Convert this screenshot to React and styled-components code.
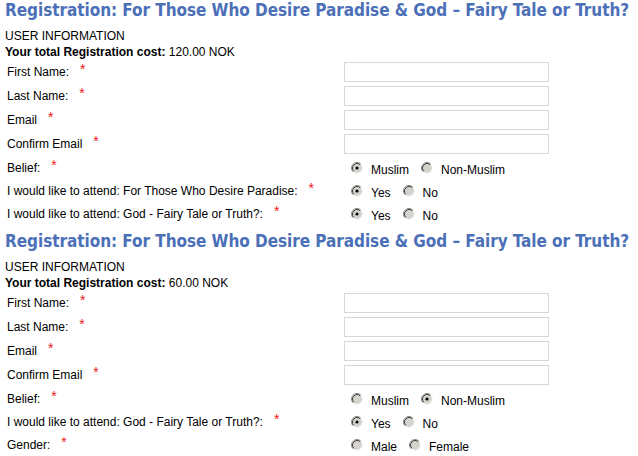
import styled, { createGlobalStyle } from "styled-components";

const Global = createGlobalStyle`
  body {
    margin: 0;
    background: #fff;
    font-family: "Liberation Sans", Arial, sans-serif;
    font-size: 12px;
    color: #000;
  }
`;

const Page = styled.div`
  padding: 0 0 0 5px;
  width: 633px;
`;

const Section = styled.section`
  margin-bottom: 6px;
`;

const Title = styled.h2`
  margin: 0 0 8px;
  font-family: "DejaVu Sans Condensed", "DejaVu Sans", sans-serif;
  font-weight: bold;
  font-size: 17px;
  letter-spacing: -0.05px;
  line-height: 20px;
  color: #4b70b7;
  white-space: nowrap;
`;

const Line = styled.div`
  line-height: 16px;
  b { font-weight: bold; }
`;

const Form = styled.div`
  display: grid;
  grid-template-columns: 339px 1fr;
`;

const Label = styled.div`
  display: flex;
  align-items: center;
  height: ${(p) => (p.$radio ? 23 : 24)}px;
  padding-left: 2px;
`;

const Star = styled.span`
  color: #f01818;
  font-size: 14px;
  margin-left: 11px;
  position: relative;
  top: -3px;
`;

const Field = styled.div`
  display: flex;
  align-items: center;
  height: 24px;
`;

const Input = styled.input`
  box-sizing: border-box;
  width: 205px;
  height: 20px;
  margin: 0;
  border: 1px solid #d7d7d7;
  background: #fff;
  outline: none;
`;

const Options = styled.div`
  display: flex;
  align-items: center;
  height: 23px;
  padding-left: 7px;
`;

const Option = styled.label`
  display: flex;
  align-items: center;
  margin-right: 12px;

  span {
    margin-left: 8px;
    position: relative;
    top: 2px;
  }
`;

function Radio({ checked }) {
  return (
    <svg width="12" height="12" viewBox="0 0 12 12">
      <circle cx="6" cy="6" r="5" fill="#d6d3ce" />
      <path d="M2.11 9.89 A5.5 5.5 0 0 1 9.89 2.11" fill="none" stroke="#8a8a8a" strokeWidth="1" />
      <path d="M9.89 2.11 A5.5 5.5 0 0 1 2.11 9.89" fill="none" stroke="#f4f4f4" strokeWidth="1" />
      <path d="M2.82 9.18 A4.5 4.5 0 0 1 9.18 2.82" fill="none" stroke="#3c3c3c" strokeWidth="1" />
      {checked && <circle cx="6" cy="6" r="1.6" fill="#000" />}
    </svg>
  );
}

function TextRow({ label }) {
  return (
    <>
      <Label>
        {label}
        <Star>*</Star>
      </Label>
      <Field>
        <Input type="text" />
      </Field>
    </>
  );
}

function RadioRow({ label, options, selected }) {
  return (
    <>
      <Label $radio>
        {label}
        <Star>*</Star>
      </Label>
      <Options>
        {options.map((o) => (
          <Option key={o}>
            <Radio checked={o === selected} />
            <span>{o}</span>
          </Option>
        ))}
      </Options>
    </>
  );
}

const TITLE = "Registration: For Those Who Desire Paradise & God \u2013 Fairy Tale or Truth?";

function Registration({ cost, radios }) {
  return (
    <Section>
      <Title>{TITLE}</Title>
      <Line>USER INFORMATION</Line>
      <Line>
        <b>Your total Registration cost:</b> {cost} NOK
      </Line>
      <Form>
        <TextRow label="First Name:" />
        <TextRow label="Last Name:" />
        <TextRow label="Email" />
        <TextRow label="Confirm Email" />
        {radios.map((r) => (
          <RadioRow key={r.label} {...r} />
        ))}
      </Form>
    </Section>
  );
}

const first = [
  { label: "Belief:", options: ["Muslim", "Non-Muslim"], selected: "Muslim" },
  { label: "I would like to attend: For Those Who Desire Paradise:", options: ["Yes", "No"], selected: "Yes" },
  { label: "I would like to attend: God - Fairy Tale or Truth?:", options: ["Yes", "No"], selected: "Yes" },
];

const second = [
  { label: "Belief:", options: ["Muslim", "Non-Muslim"], selected: "Non-Muslim" },
  { label: "I would like to attend: God - Fairy Tale or Truth?:", options: ["Yes", "No"], selected: "Yes" },
  { label: "Gender:", options: ["Male", "Female"], selected: null },
];

export default function App() {
  return (
    <>
      <Global />
      <Page>
        <Registration cost="120.00" radios={first} />
        <Registration cost="60.00" radios={second} />
      </Page>
    </>
  );
}
